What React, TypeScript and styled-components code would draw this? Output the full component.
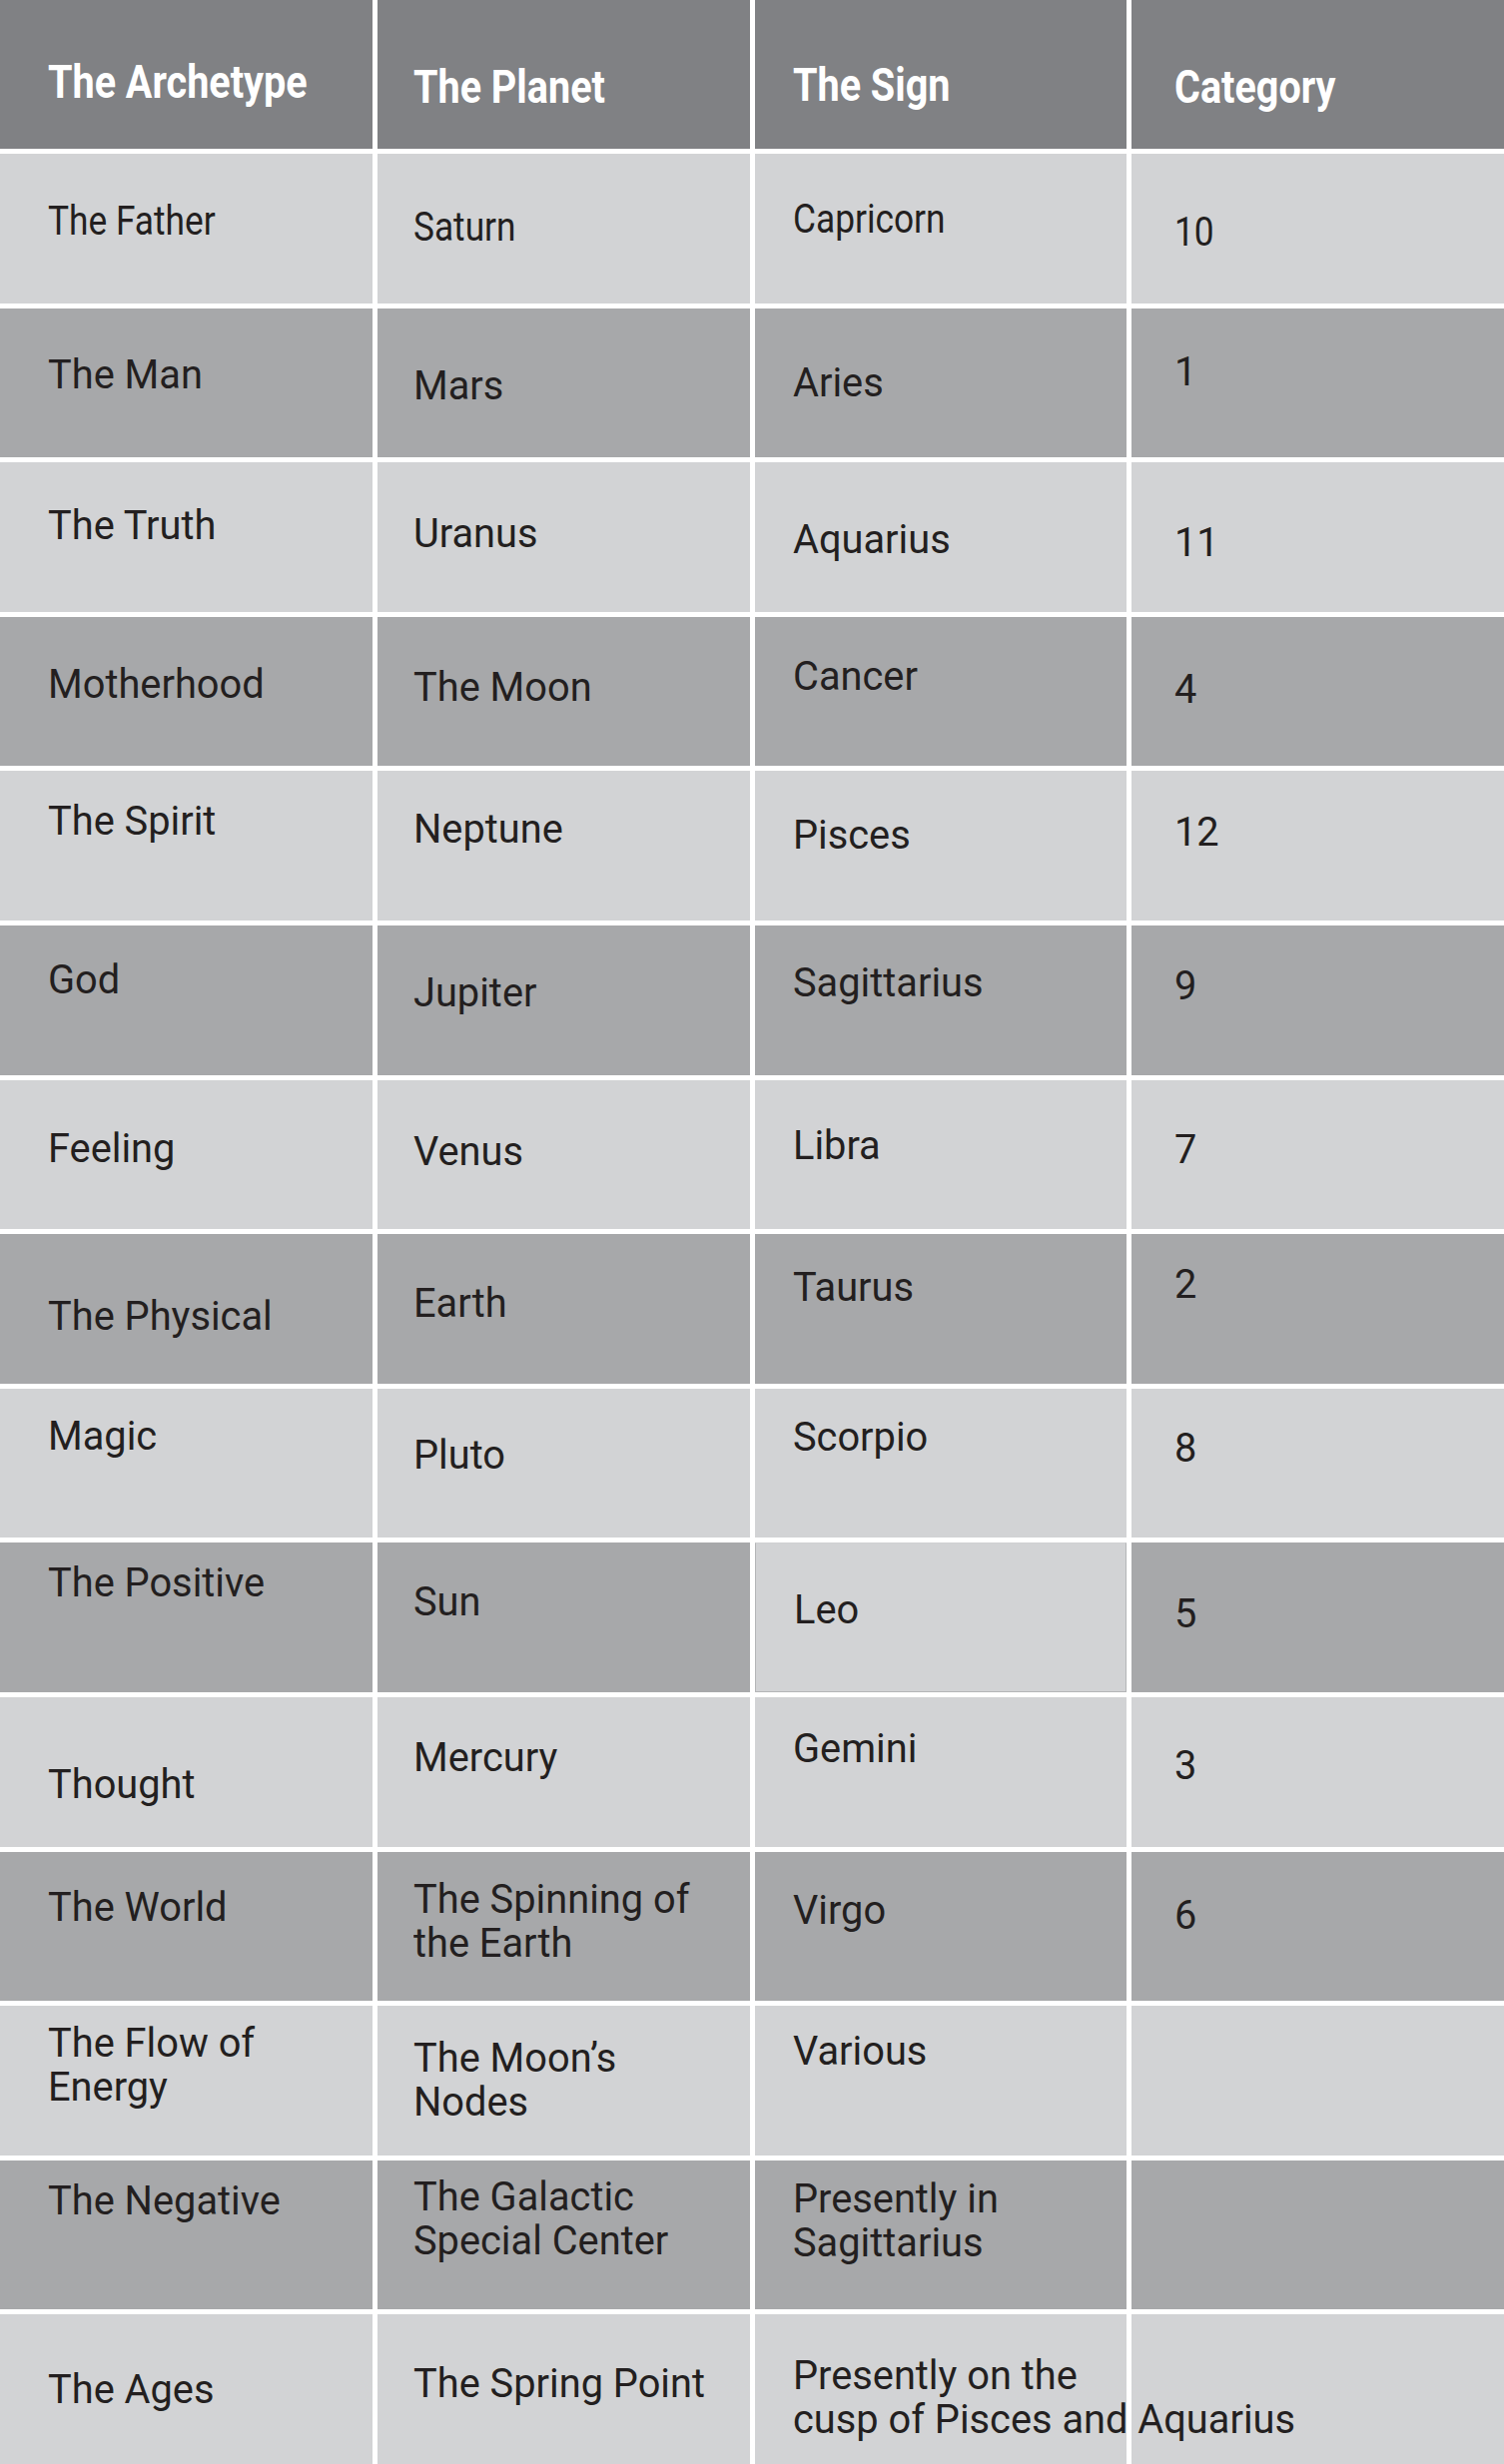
import * as React from 'react'
import styled, { createGlobalStyle } from 'styled-components'

const GlobalStyle = createGlobalStyle`
    html, body {
        margin: 0;
        padding: 0;
        background: #ffffff;
    }
    body {
        font-family: Roboto, "Liberation Sans", sans-serif;
        color: #231f20;
    }
`

type Tone = 'light' | 'dark'

const tones: Record<Tone, string> = {
    light: '#d2d3d5',
    dark: '#a7a8aa',
}

// left padding of each column, in px
const columnInset = [48, 36, 38, 43]

const Table = styled.div`
    display: grid;
    grid-template-columns: repeat(4, minmax(0, 1fr));
    grid-template-rows: 149px repeat(15, minmax(0, 1fr));
    gap: 5px;
    width: 1506px;
    height: 2468px;
    background: #ffffff;
`

const HeaderCell = styled.div<{ $col: number; $top: number }>`
    background: #808184;
    color: #ffffff;
    padding: ${p => p.$top}px 0 0 ${p => columnInset[p.$col]}px;
    font-size: 46px;
    font-weight: 700;
    line-height: 50px;
    overflow: visible;
`

const Cell = styled.div<{ $col: number; $top: number; $tone: Tone; $outlined?: boolean }>`
    box-sizing: border-box;
    background: ${p => tones[p.$tone]};
    padding: ${p => p.$top}px 0 0 ${p => columnInset[p.$col]}px;
    border: ${p => (p.$outlined ? '1px solid #b4b5b7' : 'none')};
    border-top-color: ${p => (p.$outlined ? '#cfd0d2' : 'transparent')};
    font-size: 41px;
    font-weight: 400;
    line-height: 44px;
    overflow: visible;
    min-width: 0;
`

const Label = styled.span<{ $scale: number }>`
    display: inline-block;
    white-space: nowrap;
    transform: scaleX(${p => p.$scale});
    transform-origin: left top;
`

type Entry = [string, number]

const headers: Entry[] = [
    ['The Archetype', 57],
    ['The Planet', 62],
    ['The Sign', 60],
    ['Category', 62],
]

const rows: Entry[][] = [
    [['The Father', 45], ['Saturn', 51], ['Capricorn', 43], ['10', 56]],
    [['The Man', 44], ['Mars', 55], ['Aries', 52], ['1', 41]],
    [['The Truth', 41], ['Uranus', 49], ['Aquarius', 55], ['11', 58]],
    [['Motherhood', 45], ['The Moon', 48], ['Cancer', 37], ['4', 50]],
    [['The Spirit', 28], ['Neptune', 36], ['Pisces', 42], ['12', 39]],
    [['God', 32], ['Jupiter', 45], ['Sagittarius', 35], ['9', 38]],
    [['Feeling', 46], ['Venus', 49], ['Libra', 43], ['7', 47]],
    [['The Physical', 60], ['Earth', 47], ['Taurus', 31], ['2', 28]],
    [['Magic', 25], ['Pluto', 44], ['Scorpio', 26], ['8', 37]],
    [['The Positive', 18], ['Sun', 37], ['Leo', 45], ['5', 49]],
    [['Thought', 65], ['Mercury', 38], ['Gemini', 29], ['3', 46]],
    [['The World', 33], ['The Spinning of\nthe Earth', 25], ['Virgo', 36], ['6', 41]],
    [['The Flow of\nEnergy', 15], ['The Moon’s\nNodes', 30], ['Various', 23], ['', 0]],
    [['The Negative', 18], ['The Galactic\nSpecial Center', 14], ['Presently in\nSagittarius', 16], ['', 0]],
    [['The Ages', 53], ['The Spring Point', 47], ['Presently on the\ncusp of Pisces and Aquarius', 39], ['', 0]],
]

const renderLines = (text: string) =>
    text.split('\n').map((line, i, all) => (
        <React.Fragment key={i}>
            {line}
            {i < all.length - 1 && <br />}
        </React.Fragment>
    ))

export default function App() {
    return (
        <>
            <GlobalStyle />
            <Table>
                {headers.map(([title, top], col) => (
                    <HeaderCell key={title} $col={col} $top={top}>
                        <Label $scale={0.86}>{title}</Label>
                    </HeaderCell>
                ))}
                {rows.map((row, r) =>
                    row.map(([text, top], col) => {
                        // the Leo cell is drawn light with a thin outline
                        const isLeo = text === 'Leo'
                        const tone: Tone = isLeo || r % 2 === 0 ? 'light' : 'dark'
                        // first row is set narrower than the rest
                        const scale = r === 0 ? 0.86 : 0.97
                        return (
                            <Cell
                                key={`${r}-${col}`}
                                $col={col}
                                $top={isLeo ? top - 1 : top}
                                $tone={tone}
                                $outlined={isLeo}
                            >
                                {text && <Label $scale={scale}>{renderLines(text)}</Label>}
                            </Cell>
                        )
                    })
                )}
            </Table>
        </>
    )
}
